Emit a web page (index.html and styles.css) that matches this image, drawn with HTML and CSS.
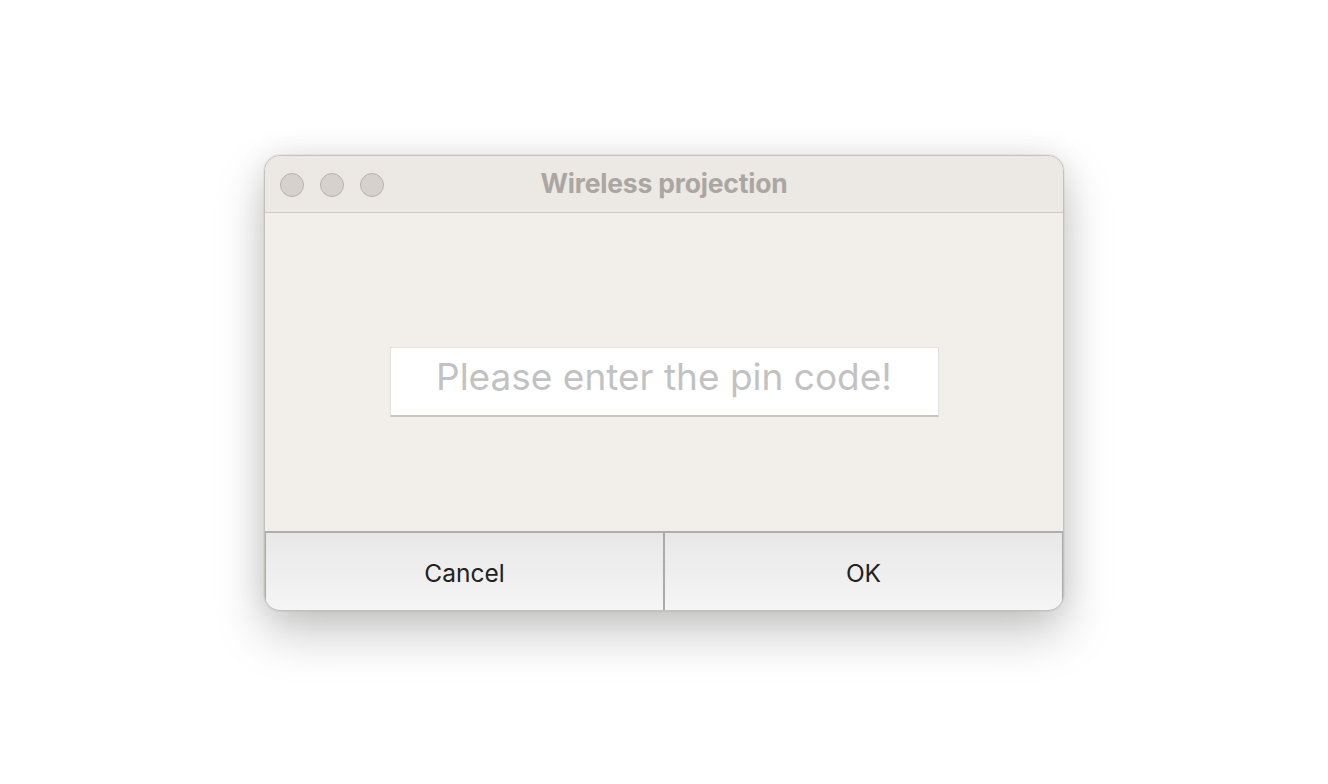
FILE: index.html
```html
<!DOCTYPE html>
<html>
<head>
<meta charset="utf-8">
<link rel="stylesheet" href="styles.css">
</head>
<body>
<div class="stage">
  <div class="window">
    <div class="titlebar">
      <div class="lights">
        <span class="light"></span>
        <span class="light"></span>
        <span class="light"></span>
      </div>
      <div class="title">Wireless projection</div>
    </div>
    <div class="content">
      <input class="pin" type="text" placeholder="Please enter the pin code!">
    </div>
    <div class="buttons">
      <button class="btn">Cancel</button>
      <button class="btn">OK</button>
    </div>
  </div>
</div>
</body>
</html>
```
FILE: styles.css
```css
html, body {
  margin: 0;
  padding: 0;
  background: #ffffff;
  width: 1328px;
  height: 784px;
  overflow: hidden;
}
.stage {
  display: flex;
  justify-content: center;
  padding-top: 155px;
}
.window {
  width: 800px;
  height: 456px;
  box-sizing: border-box;
  border-radius: 16px;
  border: 1px solid #c4c0bc;
  background: #f2eeea;
  overflow: hidden;
  display: flex;
  flex-direction: column;
  box-shadow: 0 0 0 1px rgba(0,0,0,0.04), 0 22px 50px rgba(0,0,0,0.22), 0 0 30px rgba(0,0,0,0.08);
}
.titlebar {
  height: 56px;
  background: #ece8e4;
  border-bottom: 1px solid #cdc8c4;
  position: relative;
  display: flex;
  align-items: center;
  flex-shrink: 0;
}
.lights {
  display: flex;
  gap: 16px;
  padding-left: 15px;
  padding-top: 1px;
}
.light {
  width: 22px;
  height: 22px;
  border-radius: 50%;
  background: #d6d1cd;
  border: 1px solid #b8b3af;
}
.title {
  position: absolute;
  left: 0;
  right: 0;
  top: 0;
  bottom: 2px;
  display: flex;
  align-items: center;
  justify-content: center;
  font-family: "Inter", "Liberation Sans", sans-serif;
  font-weight: 700;
  font-size: 26.5px;
  color: #aaa6a2;
  letter-spacing: -0.2px;
}
.content {
  flex: 1;
  display: flex;
  align-items: center;
  justify-content: center;
  padding-top: 20px;
}
.pin {
  width: 549px;
  height: 70px;
  box-sizing: border-box;
  border: 1px solid #e4e0dc;
  border-bottom: 2px solid #c8c4c0;
  background: #ffffff;
  outline: none;
  text-align: center;
  font-family: "Inter", "Liberation Sans", sans-serif;
  font-size: 37px;
  color: #333;
  padding: 0 0 9px 0;
}
.pin::placeholder {
  color: #c2c2c2;
}
.buttons {
  display: flex;
  height: 77px;
  flex-shrink: 0;
  border-top: 2px solid #b0acaa;
  gap: 2px;
  background: #aaaaaa;
  margin-top: 1px;
}
.btn {
  flex: 1;
  margin: 0;
  border: none;
  background: linear-gradient(#e8e8e8, #f5f5f5);
  font-family: "Inter", "Liberation Sans", sans-serif;
  font-size: 24.5px;
  color: #222222;
  padding: 2px 0 0 0;
}
.btn:first-child {
  border-left: 1px solid #aaaaaa;
}
.btn:last-child {
  border-right: 1px solid #aaaaaa;
}
```
